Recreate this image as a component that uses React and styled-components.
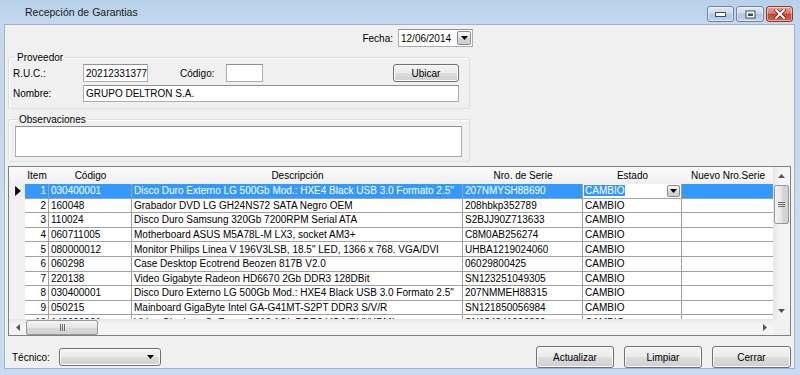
import React from 'react';
import styled, { createGlobalStyle } from 'styled-components';

const GlobalStyle = createGlobalStyle`
  body {
    margin: 0;
    background: #c4d9ef;
    font-family: "Liberation Sans", Arial, sans-serif;
    font-size: 10px;
    color: #000;
  }
  * { box-sizing: border-box; }
`;

const Window = styled.div`
  width: 800px;
  height: 375px;
  display: flex;
  flex-direction: column;
  background: linear-gradient(#b8d0ea 0px, #c3d8ee 24px, #c8dcf1 100%);
`;

const TitleBar = styled.div`
  height: 24px;
  flex-shrink: 0;
  display: flex;
  align-items: flex-start;
  padding: 0 7px 0 25px;
`;

const Title = styled.span`
  margin-top: 6px;
  font-size: 10.5px;
  color: #1a1a1a;
`;

const CaptionButtons = styled.div`
  margin-left: auto;
  margin-top: 6px;
  display: flex;
  gap: 2px;
`;

const CaptionButton = styled.div`
  width: ${p => p.$w || 27}px;
  height: 16px;
  border: 1px solid ${p => (p.$close ? '#8b3b30' : '#6f829c')};
  border-radius: 3px;
  display: flex;
  align-items: center;
  justify-content: center;
  background: ${p =>
    p.$close
      ? 'linear-gradient(#eaa596 0%, #d97a66 45%, #c4442f 50%, #d4644f 100%)'
      : 'linear-gradient(#e2ebf6 0%, #ccdaec 45%, #b3c8e2 50%, #bdd1e8 100%)'};
  box-shadow: inset 0 0 0 1px rgba(255, 255, 255, 0.45);
`;

const Client = styled.div`
  flex: 1;
  margin: 0 5px 7px 4px;
  background: #f0f0f0;
  border: 1px solid #9fb3cb;
  padding: 0 3px 0 3px;
  display: flex;
  flex-direction: column;
`;

const FechaRow = styled.div`
  width: 465px;
  height: 18px;
  margin-top: 4px;
  display: flex;
  justify-content: flex-end;
  align-items: center;
  gap: 5px;
`;

const Label = styled.span`
  width: ${p => (p.$w ? `${p.$w}px` : 'auto')};
  margin-left: ${p => p.$ml || 0}px;
  flex-shrink: 0;
  white-space: nowrap;
`;

const TextBox = styled.div`
  width: ${p => (p.$w ? `${p.$w}px` : 'auto')};
  flex: ${p => (p.$w ? '0 0 auto' : '1')};
  height: ${p => p.$h || 18}px;
  background: #fff;
  border: 1px solid #abadb3;
  border-top-color: #8e9096;
  padding: 0 2px;
  display: flex;
  align-items: center;
  white-space: nowrap;
  overflow: hidden;
`;

const DatePicker = styled(TextBox)`
  padding: 0 1px 0 2px;
  justify-content: space-between;
`;

const SmallDrop = styled.div`
  width: 14px;
  height: 14px;
  border: 1px solid #8a8a8a;
  border-radius: 2px;
  background: linear-gradient(#f6f6f6 0%, #e4e4e4 50%, #d4d4d4 51%, #cfcfcf 100%);
  display: flex;
  align-items: center;
  justify-content: center;
`;

const GroupBox = styled.fieldset`
  width: 462px;
  margin: ${p => p.$top}px 0 0 0;
  padding: 0 ${p => p.$pr}px ${p => p.$pb}px ${p => p.$pl}px;
  border: 1px solid #d5dfe5;
  border-radius: 3px;
  box-shadow: inset 1px 1px 0 #fff;
`;

const Legend = styled.legend`
  margin-left: 2px;
  padding: 0 2px;
  line-height: 13px;
`;

const FormRow = styled.div`
  display: flex;
  align-items: center;
  height: ${p => p.$h}px;
  margin-top: ${p => p.$mt || 0}px;
`;

const Button = styled.button`
  width: ${p => p.$w}px;
  height: ${p => p.$h}px;
  margin-left: ${p => (p.$push ? 'auto' : '0')};
  border: 1px solid #707070;
  border-radius: 3px;
  background: linear-gradient(#f3f3f3 0%, #ebebeb 48%, #dddddd 52%, #cfcfcf 100%);
  box-shadow: inset 0 0 0 1px #fcfcfc;
  font-family: inherit;
  font-size: 10px;
  color: #000;
  padding: 0;
`;

const TextArea = styled.div`
  height: 31px;
  background: #fff;
  border: 1px solid #abadb3;
  border-top-color: #8e9096;
`;

const Grid = styled.div`
  margin-top: 4px;
  height: 170px;
  border: 1px solid #7f7f7f;
  display: flex;
  flex-direction: column;
  background: #fff;
`;

const GridMain = styled.div`
  flex: 1;
  display: flex;
  overflow: hidden;
`;

const GridBody = styled.div`
  flex: 1;
  overflow: hidden;
  background: #ababab;
`;

const COLS = '16px 24px 83px 331px 120px 99px 92px';

const HeaderRow = styled.div`
  display: grid;
  grid-template-columns: ${COLS};
  height: 17px;
  background: linear-gradient(#fbfbfb, #f0f0f0);
`;

const HeaderCell = styled.div`
  display: flex;
  align-items: center;
  justify-content: center;
  white-space: nowrap;
  overflow: hidden;
`;

const Row = styled.div`
  display: grid;
  grid-template-columns: ${COLS};
  height: 14.6px;
  background: #fff;
`;

const RowHead = styled.div`
  background: #f0f0f0;
  display: flex;
  align-items: center;
  justify-content: center;
  padding-left: 2px;
`;

const Cell = styled.div`
  border-right: 1px solid #a0a0a0;
  border-bottom: 1px solid #a0a0a0;
  padding: 0 2px;
  display: flex;
  align-items: center;
  justify-content: ${p => (p.$right ? 'flex-end' : 'flex-start')};
  white-space: nowrap;
  overflow: hidden;
  background: ${p => (p.$sel ? '#3399ff' : 'transparent')};
  color: ${p => (p.$sel ? '#fff' : '#000')};
`;

const EditCell = styled(Cell)`
  padding: 0 1px 0 1px;
  justify-content: space-between;
`;

const SelText = styled.span`
  background: #3399ff;
  color: #fff;
  padding: 0 1px;
`;

const VScroll = styled.div`
  width: 17px;
  flex-shrink: 0;
  background: linear-gradient(90deg, #e6e6e6, #f4f4f4 40%, #f4f4f4);
  display: flex;
  flex-direction: column;
  align-items: center;
`;

const ScrollArrow = styled.div`
  width: 17px;
  height: 17px;
  display: flex;
  align-items: center;
  justify-content: center;
  flex-shrink: 0;
`;

const VThumb = styled.div`
  width: 15px;
  height: 39px;
  margin-top: 1px;
  border: 1px solid #979797;
  border-radius: 2px;
  background: linear-gradient(90deg, #f2f2f2, #e6e6e6 50%, #d8d8d8 51%, #d2d2d2);
  display: flex;
  align-items: center;
  justify-content: center;
`;

const HScrollRow = styled.div`
  height: 16px;
  flex-shrink: 0;
  display: flex;
  background: linear-gradient(#e6e6e6, #f4f4f4 40%, #f4f4f4);
`;

const HTrack = styled.div`
  flex: 1;
  display: flex;
  align-items: center;
`;

const HThumb = styled.div`
  width: 72px;
  height: 15px;
  border: 1px solid #979797;
  border-radius: 2px;
  background: linear-gradient(#f2f2f2, #e6e6e6 50%, #d8d8d8 51%, #d2d2d2);
  display: flex;
  align-items: center;
  justify-content: center;
`;

const Corner = styled.div`
  width: 17px;
  background: #f0f0f0;
`;

const BottomRow = styled.div`
  margin-top: 10px;
  display: flex;
  align-items: center;
  height: 22px;
  padding-left: 4px;
`;

const ComboButton = styled(Button)`
  display: flex;
  align-items: center;
  justify-content: flex-end;
  padding-right: 6px;
  margin-left: 9px;
`;

const ActionGroup = styled.div`
  margin-left: auto;
  display: flex;
  gap: 10px;
`;

const Tri = ({ dir = 'down', size = 7, color = '#000' }) => {
  const pts = {
    down: '0,0 7,0 3.5,4',
    up: '0,4 7,4 3.5,0',
    right: '0,0 4,3.5 0,7',
    left: '4,0 0,3.5 4,7',
  }[dir];
  const vert = dir === 'down' || dir === 'up';
  const w = vert ? size : Math.round(size * 4 / 7);
  const h = vert ? Math.round(size * 4 / 7) : size;
  return (
    <svg width={w} height={h} viewBox={vert ? '0 0 7 4' : '0 0 4 7'}>
      <polygon points={pts} fill={color} />
    </svg>
  );
};

const rows = [
  ['1', '030400001', 'Disco Duro Externo LG 500Gb Mod.: HXE4 Black USB 3.0 Formato 2.5"', '207NMYSH88690'],
  ['2', '160048', 'Grabador DVD LG GH24NS72 SATA Negro OEM', '208hbkp352789'],
  ['3', '110024', 'Disco Duro Samsung 320Gb 7200RPM Serial ATA', 'S2BJJ90Z713633'],
  ['4', '060711005', 'Motherboard ASUS M5A78L-M LX3, socket AM3+', 'C8M0AB256274'],
  ['5', '080000012', 'Monitor Philips Linea V 196V3LSB, 18.5" LED, 1366 x 768. VGA/DVI', 'UHBA1219024060'],
  ['6', '060298', 'Case Desktop Ecotrend Beozen 817B V2.0', '06029800425'],
  ['7', '220138', 'Video Gigabyte Radeon HD6670 2Gb DDR3 128DBit', 'SN123251049305'],
  ['8', '030400001', 'Disco Duro Externo LG 500Gb Mod.: HXE4 Black USB 3.0 Formato 2.5"', '207NMMEH88315'],
  ['9', '050215', 'Mainboard GigaByte Intel GA-G41MT-S2PT DDR3 S/V/R', 'SN121850056984'],
  ['10', '143600001', 'Video Gigabyte GeForce G210 1Gb DDR3 VGA/DVI/HDMI', 'SN124241096339'],
];

const App = () => {
  return (
    <Window>
      <GlobalStyle />
      <TitleBar>
        <Title>Recepción de Garantias</Title>
        <CaptionButtons>
          <CaptionButton>
            <svg width="11" height="6" viewBox="0 0 11 6">
              <rect x="0.5" y="1.5" width="10" height="4" fill="#fff" stroke="#3a4a60" />
            </svg>
          </CaptionButton>
          <CaptionButton $w={28}>
            <svg width="11" height="9" viewBox="0 0 11 9">
              <rect x="0.5" y="0.5" width="10" height="8" fill="#3a4a60" />
              <rect x="1.5" y="1.5" width="8" height="6" fill="#fff" />
              <rect x="3" y="3.5" width="5" height="2.5" fill="#3a4a60" />
            </svg>
          </CaptionButton>
          <CaptionButton $close>
            <svg width="12" height="10" viewBox="0 0 12 10">
              <path d="M2 1 L10 9 M10 1 L2 9" stroke="#5a1d15" strokeWidth="3.4" strokeLinecap="square" />
              <path d="M2 1 L10 9 M10 1 L2 9" stroke="#fff" strokeWidth="2" strokeLinecap="square" />
            </svg>
          </CaptionButton>
        </CaptionButtons>
      </TitleBar>

      <Client>
        <FechaRow>
          <Label>Fecha:</Label>
          <DatePicker $w={75}>
            <span>12/06/2014</span>
            <SmallDrop>
              <Tri />
            </SmallDrop>
          </DatePicker>
        </FechaRow>

        <GroupBox $top={4} $pl={4} $pr={10} $pb={6}>
          <Legend>Proveedor</Legend>
          <FormRow $h={18}>
            <Label $w={70}>R.U.C.:</Label>
            <TextBox $w={65}>20212331377</TextBox>
            <Label $w={46} $ml={32}>Código:</Label>
            <TextBox $w={37} />
            <Button $w={66} $h={18} $push>Ubicar</Button>
          </FormRow>
          <FormRow $h={17} $mt={3}>
            <Label $w={70}>Nombre:</Label>
            <TextBox $h={17}>GRUPO DELTRON S.A.</TextBox>
          </FormRow>
        </GroupBox>

        <GroupBox $top={4} $pl={6} $pr={7} $pb={4}>
          <Legend>Observaciones</Legend>
          <TextArea />
        </GroupBox>

        <Grid>
          <GridMain>
            <GridBody>
              <HeaderRow>
                <HeaderCell />
                <HeaderCell>Item</HeaderCell>
                <HeaderCell>Código</HeaderCell>
                <HeaderCell>Descripción</HeaderCell>
                <HeaderCell>Nro. de Serie</HeaderCell>
                <HeaderCell>Estado</HeaderCell>
                <HeaderCell>Nuevo Nro.Serie</HeaderCell>
              </HeaderRow>
              {rows.map((r, i) => {
                const sel = i === 0;
                return (
                  <Row key={i}>
                    <RowHead>{sel && <Tri dir="right" size={10} />}</RowHead>
                    <Cell $right $sel={sel}>{r[0]}</Cell>
                    <Cell $sel={sel}>{r[1]}</Cell>
                    <Cell $sel={sel}>{r[2]}</Cell>
                    <Cell $sel={sel}>{r[3]}</Cell>
                    {sel ? (
                      <EditCell>
                        <SelText>CAMBIO</SelText>
                        <SmallDrop style={{ width: 13, height: 12 }}>
                          <Tri />
                        </SmallDrop>
                      </EditCell>
                    ) : (
                      <Cell>CAMBIO</Cell>
                    )}
                    <Cell $sel={sel} />
                  </Row>
                );
              })}
            </GridBody>
            <VScroll>
              <ScrollArrow>
                <Tri dir="up" color="#555" />
              </ScrollArrow>
              <VThumb>
                <svg width="7" height="7" viewBox="0 0 7 7">
                  <path d="M0 1.5h7M0 3.5h7M0 5.5h7" stroke="#6b6b6b" strokeWidth="1" />
                </svg>
              </VThumb>
              <ScrollArrow style={{ marginTop: 'auto' }}>
                <Tri dir="down" color="#555" />
              </ScrollArrow>
            </VScroll>
          </GridMain>
          <HScrollRow>
            <HTrack>
              <ScrollArrow style={{ height: 16 }}>
                <Tri dir="left" color="#555" />
              </ScrollArrow>
              <HThumb>
                <svg width="7" height="7" viewBox="0 0 7 7">
                  <path d="M1.5 0v7M3.5 0v7M5.5 0v7" stroke="#6b6b6b" strokeWidth="1" />
                </svg>
              </HThumb>
              <ScrollArrow style={{ height: 16, marginLeft: 'auto' }}>
                <Tri dir="right" color="#555" />
              </ScrollArrow>
            </HTrack>
            <Corner />
          </HScrollRow>
        </Grid>

        <BottomRow>
          <Label>Técnico:</Label>
          <ComboButton $w={102} $h={18}>
            <Tri />
          </ComboButton>
          <ActionGroup>
            <Button $w={78} $h={22}>Actualizar</Button>
            <Button $w={78} $h={22}>Limpiar</Button>
            <Button $w={79} $h={22}>Cerrar</Button>
          </ActionGroup>
        </BottomRow>
      </Client>
    </Window>
  );
};

export default App;
